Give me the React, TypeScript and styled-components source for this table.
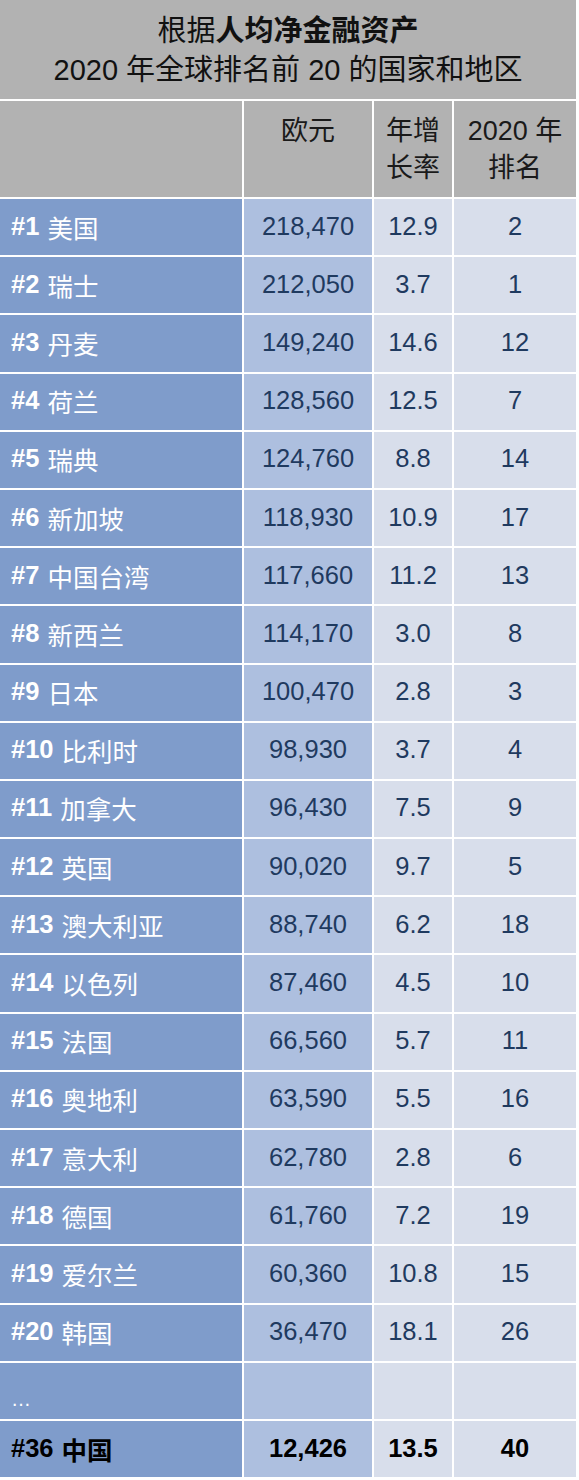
import React from "react";
import styled, { createGlobalStyle } from "styled-components";

const Global = createGlobalStyle`
  html, body { margin: 0; padding: 0; background: #ffffff; }
  body { font-family: "Liberation Sans", Arial, "Noto Sans CJK SC", sans-serif; }
`;

const Page = styled.div`
  width: 576px;
  display: flex;
  flex-direction: column;
  gap: 2px;
`;

const Title = styled.div`
  height: 99px;
  background: #b2b2b2;
  color: #111;
  font-size: 29px;
  line-height: 39px;
  text-align: center;
  display: flex;
  flex-direction: column;
  justify-content: center;
  padding-top: 2px;
  box-sizing: border-box;
`;

const Strong = styled.b`
  font-weight: 700;
`;

const Grid = styled.div`
  display: grid;
  grid-template-columns: 242px 128px 78px 122px;
  grid-template-rows: 96px;
  grid-auto-rows: 56.2px;
  gap: 2px;
`;

const HeadCell = styled.div`
  background: #b2b2b2;
  color: #1a1a1a;
  font-size: 27px;
  line-height: 37px;
  text-align: center;
  padding-top: 12px;
`;

const Cell = styled.div<{ $tone: "a" | "b" | "c"; $bold?: boolean; $left?: boolean }>`
  background: ${(p) => (p.$tone === "a" ? "#7f9ccb" : p.$tone === "b" ? "#adbfdf" : "#d8deeb")};
  color: ${(p) => (p.$bold ? "#000" : p.$tone === "a" ? "#ffffff" : "#1f3a5f")};
  font-size: 25.5px;
  font-weight: ${(p) => (p.$bold ? 700 : 400)};
  display: flex;
  align-items: center;
  justify-content: ${(p) => (p.$left ? "flex-start" : "center")};
  padding-left: ${(p) => (p.$left ? "11px" : "0")};
  padding-bottom: 2px;
  white-space: nowrap;
`;

const Rank = styled.span`
  font-weight: 700;
  margin-right: 8px;
`;

const Ellipsis = styled.span`
  font-size: 20px;
  padding-top: 20px;
`;

const rows: [string, string, string, string, string][] = [
  ["#1", "美国", "218,470", "12.9", "2"],
  ["#2", "瑞士", "212,050", "3.7", "1"],
  ["#3", "丹麦", "149,240", "14.6", "12"],
  ["#4", "荷兰", "128,560", "12.5", "7"],
  ["#5", "瑞典", "124,760", "8.8", "14"],
  ["#6", "新加坡", "118,930", "10.9", "17"],
  ["#7", "中国台湾", "117,660", "11.2", "13"],
  ["#8", "新西兰", "114,170", "3.0", "8"],
  ["#9", "日本", "100,470", "2.8", "3"],
  ["#10", "比利时", "98,930", "3.7", "4"],
  ["#11", "加拿大", "96,430", "7.5", "9"],
  ["#12", "英国", "90,020", "9.7", "5"],
  ["#13", "澳大利亚", "88,740", "6.2", "18"],
  ["#14", "以色列", "87,460", "4.5", "10"],
  ["#15", "法国", "66,560", "5.7", "11"],
  ["#16", "奥地利", "63,590", "5.5", "16"],
  ["#17", "意大利", "62,780", "2.8", "6"],
  ["#18", "德国", "61,760", "7.2", "19"],
  ["#19", "爱尔兰", "60,360", "10.8", "15"],
  ["#20", "韩国", "36,470", "18.1", "26"],
];

export default function App() {
  return (
    <>
      <Global />
      <Page>
        <Title>
          <div>
            根据<Strong>人均净金融资产</Strong>
          </div>
          <div>2020 年全球排名前 20 的国家和地区</div>
        </Title>
        <Grid>
          <HeadCell />
          <HeadCell>欧元</HeadCell>
          <HeadCell>
            年增
            <br />
            长率
          </HeadCell>
          <HeadCell>
            2020 年
            <br />
            排名
          </HeadCell>
          {rows.map(([r, n, e, g, k]) => (
            <React.Fragment key={r}>
              <Cell $tone="a" $left>
                <Rank>{r}</Rank>
                {n}
              </Cell>
              <Cell $tone="b">{e}</Cell>
              <Cell $tone="c">{g}</Cell>
              <Cell $tone="c">{k}</Cell>
            </React.Fragment>
          ))}
          <Cell $tone="a" $left>
            <Ellipsis>…</Ellipsis>
          </Cell>
          <Cell $tone="b" />
          <Cell $tone="c" />
          <Cell $tone="c" />
          <Cell $tone="a" $left $bold>
            <Rank>#36</Rank>中国
          </Cell>
          <Cell $tone="b" $bold>12,426</Cell>
          <Cell $tone="c" $bold>13.5</Cell>
          <Cell $tone="c" $bold>40</Cell>
        </Grid>
      </Page>
    </>
  );
}
